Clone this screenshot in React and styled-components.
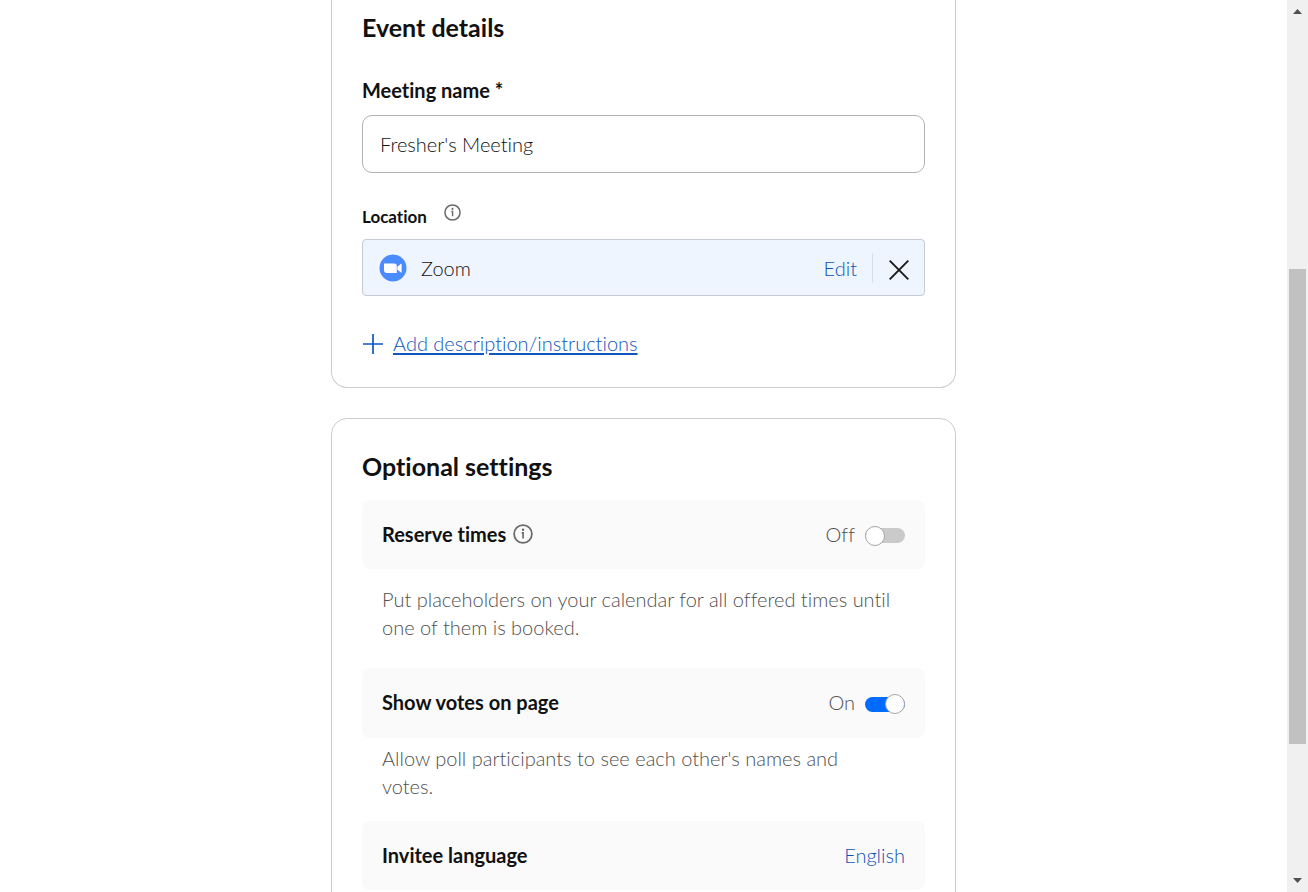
import React, { useState } from 'react';
import styled, { createGlobalStyle } from 'styled-components';

const GlobalStyle = createGlobalStyle`
  *, *::before, *::after { box-sizing: border-box; }
  body {
    margin: 0;
    background: #ffffff;
    color: #111111;
    font-family: Lato, "Liberation Sans", sans-serif;
    font-size: 20px;
    font-weight: 300;
    font-variant-ligatures: none;
    line-height: 28px;
  }
  h2, p { margin: 0; }
  button, input { font: inherit; font-variant-ligatures: none; color: inherit; }
`;

const Shell = styled.div`
  display: flex;
  height: 100vh;
  overflow: hidden;
`;

const Content = styled.main`
  flex: 1;
  min-width: 0;
  display: flex;
  flex-direction: column;
  align-items: center;
  gap: 30px;
  overflow: hidden;
`;

const Card = styled.section`
  flex: none;
  width: 100%;
  max-width: 625px;
  padding: ${({ $continued }) => ($continued ? '11px 30px 29px' : '31px 30px')};
  border: 1px solid #cccccc;
  border-top-width: ${({ $continued }) => ($continued ? '0' : '1px')};
  border-radius: ${({ $continued }) => ($continued ? '0 0 16px 16px' : '16px')};
`;

const Heading = styled.h2`
  font-size: 25px;
  font-weight: 700;
  line-height: 32px;
`;

const Field = styled.div`
  display: flex;
  flex-direction: column;
  gap: ${({ $gap }) => $gap}px;
  margin-top: ${({ $top }) => $top}px;
`;

const Label = styled.label`
  font-weight: 700;
`;

const TextInput = styled.input`
  width: 100%;
  height: 58px;
  padding: 0 17px;
  border: 1px solid #b2b2b2;
  border-radius: 10px;
  background: #ffffff;
  outline: none;
`;

const LocationLabel = styled.div`
  display: flex;
  gap: 17px;
  font-size: 17px;
  font-weight: 700;
`;

const IconButton = styled.button`
  display: flex;
  align-self: ${({ $align }) => $align || 'center'};
  padding: ${({ $pad }) => $pad || '0'};
  border: 0;
  background: none;
  color: #6b6b6b;
`;

const LocationBox = styled.div`
  display: flex;
  align-items: center;
  height: 57px;
  padding: 0 15px 0 16px;
  border: 1px solid #c6cad2;
  border-radius: 4px;
  background: #eef5ff;
`;

const LocationName = styled.span`
  flex: 1;
  margin-left: 14px;
`;

const TextButton = styled.button`
  padding: 0;
  border: 0;
  background: none;
  color: #0f52b5;
`;

const Divider = styled.span`
  width: 1px;
  height: 30px;
  margin: 0 16px 0 15px;
  background: #d5dfee;
`;

const AddRow = styled.div`
  display: flex;
  align-items: center;
  gap: 9px;
  margin-top: 33px;
  color: #0f56bd;
`;

const AddLink = styled.a`
  padding-bottom: 1px;
  color: inherit;
  text-decoration: underline;
  text-decoration-thickness: 2px;
  text-underline-offset: 2px;
`;

const SettingRow = styled.div`
  display: flex;
  align-items: center;
  justify-content: space-between;
  height: ${({ $tall }) => ($tall ? '70px' : '69px')};
  margin-top: ${({ $gap }) => $gap}px;
  padding: 0 20px 2px;
  border-radius: 8px;
  background: #fafafa;
`;

const SettingName = styled.span`
  display: flex;
  align-items: center;
  gap: 7px;
  font-weight: 700;
`;

const ToggleLabel = styled.label`
  display: flex;
  align-items: center;
  gap: 10px;
  color: #4f4f4f;
`;

const Switch = styled.input`
  appearance: none;
  display: grid;
  align-items: center;
  width: 40px;
  height: 20px;
  margin: 4px 0 0;
  &::before, &::after { content: ''; grid-area: 1 / 1; }
  &::before {
    height: 15px;
    border-radius: 8px;
    background: #cacaca;
  }
  &::after {
    width: 20px;
    height: 20px;
    border: 1px solid #a6a6a6;
    border-radius: 50%;
    background: #ffffff;
  }
  &:checked::before { background: #006bff; }
  &:checked::after { justify-self: end; }
`;

const Description = styled.p`
  margin-top: ${({ $gap }) => $gap}px;
  padding: 0 33px 0 20px;
  color: #4f4f4f;
`;

const ScrollBar = styled.div`
  flex: none;
  display: flex;
  flex-direction: column;
  align-items: center;
  width: 21px;
  background: #f0f0f0;
`;

const ScrollArrow = styled.button`
  display: flex;
  align-items: center;
  justify-content: center;
  width: 100%;
  height: 23px;
  padding: 0;
  border: 0;
  background: none;
`;

const ScrollTrack = styled.div`
  flex: 1;
  display: grid;
  grid-template-rows: 246fr 475fr 125fr;
`;

const ScrollThumb = styled.div`
  grid-row: 2;
  width: 17px;
  background: #c1c1c1;
`;

function InfoIcon({ size }) {
  return (
    <svg width={size} height={size} viewBox="0 0 18 18" fill="none" aria-hidden="true">
      <circle cx="9" cy="9" r="8" stroke="currentColor" strokeWidth="1.6" />
      <circle cx="9" cy="5.2" r="1.1" fill="currentColor" />
      <path d="M7.8 8h1.3v5" stroke="currentColor" strokeWidth="1.5" />
    </svg>
  );
}

function ZoomIcon() {
  return (
    <svg width="28" height="28" viewBox="0 0 28 28" aria-hidden="true">
      <circle cx="14" cy="14" r="13.5" fill="#4a8cff" />
      <path d="M5 9.5h10.4a2.4 2.4 0 0 1 2.4 2.4v7H7.4A2.4 2.4 0 0 1 5 16.5z" fill="#ffffff" />
      <path d="M18.4 12.7 22 9.8q.6-.4.6.3v8.2q0 .7-.6.3l-3.6-2.8z" fill="#ffffff" />
    </svg>
  );
}

function CloseIcon() {
  return (
    <svg width="20" height="20" viewBox="0 0 20 20" aria-hidden="true">
      <path d="M.7.7l18.6 18.6M19.3.7L.7 19.3" stroke="#1a1a1a" strokeWidth="1.9" />
    </svg>
  );
}

function PlusIcon() {
  return (
    <svg width="22" height="22" viewBox="0 0 22 22" aria-hidden="true">
      <path d="M11 1v20M1 11h20" stroke="currentColor" strokeWidth="1.7" />
    </svg>
  );
}

function Arrow({ down }) {
  return (
    <svg width="9" height="5" viewBox="0 0 9 5" aria-hidden="true">
      <path d={down ? 'M0 0h9L4.5 5z' : 'M0 5h9L4.5 0z'} fill="#505050" />
    </svg>
  );
}

function Toggle({ name, initial }) {
  const [on, setOn] = useState(initial);
  return (
    <ToggleLabel>
      {on ? 'On' : 'Off'}
      <Switch
        type="checkbox"
        role="switch"
        aria-label={name}
        checked={on}
        onChange={(e) => setOn(e.target.checked)}
      />
    </ToggleLabel>
  );
}

export default function App() {
  const [name, setName] = useState("Fresher's Meeting");
  return (
    <>
      <GlobalStyle />
      <Shell>
        <Content>
          <Card $continued>
            <Heading>Event details</Heading>
            <Field $top={33} $gap={11}>
              <Label htmlFor="meeting-name">Meeting name *</Label>
              <TextInput
                id="meeting-name"
                type="text"
                value={name}
                onChange={(e) => setName(e.target.value)}
              />
            </Field>
            <Field $top={30} $gap={8}>
              <LocationLabel>
                Location
                <IconButton $align="flex-start" $pad="1px 0 0" aria-label="About location">
                  <InfoIcon size={17} />
                </IconButton>
              </LocationLabel>
              <LocationBox>
                <ZoomIcon />
                <LocationName>Zoom</LocationName>
                <TextButton>Edit</TextButton>
                <Divider />
                <IconButton $pad="4px 0 0" aria-label="Remove location">
                  <CloseIcon />
                </IconButton>
              </LocationBox>
            </Field>
            <AddRow>
              <PlusIcon />
              <AddLink href="#description">Add description/instructions</AddLink>
            </AddRow>
          </Card>

          <Card>
            <Heading>Optional settings</Heading>
            <SettingRow $gap={18}>
              <SettingName>
                Reserve times
                <IconButton aria-label="About reserve times">
                  <InfoIcon size={20} />
                </IconButton>
              </SettingName>
              <Toggle name="Reserve times" initial={false} />
            </SettingRow>
            <Description $gap={16}>
              Put placeholders on your calendar for all offered times until one of them is booked.
            </Description>
            <SettingRow $gap={27} $tall>
              <SettingName>Show votes on page</SettingName>
              <Toggle name="Show votes on page" initial />
            </SettingRow>
            <Description $gap={6}>
              Allow poll participants to see each other's names and votes.
            </Description>
            <SettingRow $gap={21}>
              <SettingName>Invitee language</SettingName>
              <TextButton>English</TextButton>
            </SettingRow>
          </Card>
        </Content>
        <ScrollBar>
          <ScrollArrow aria-label="Scroll up"><Arrow /></ScrollArrow>
          <ScrollTrack><ScrollThumb /></ScrollTrack>
          <ScrollArrow aria-label="Scroll down"><Arrow down /></ScrollArrow>
        </ScrollBar>
      </Shell>
    </>
  );
}
